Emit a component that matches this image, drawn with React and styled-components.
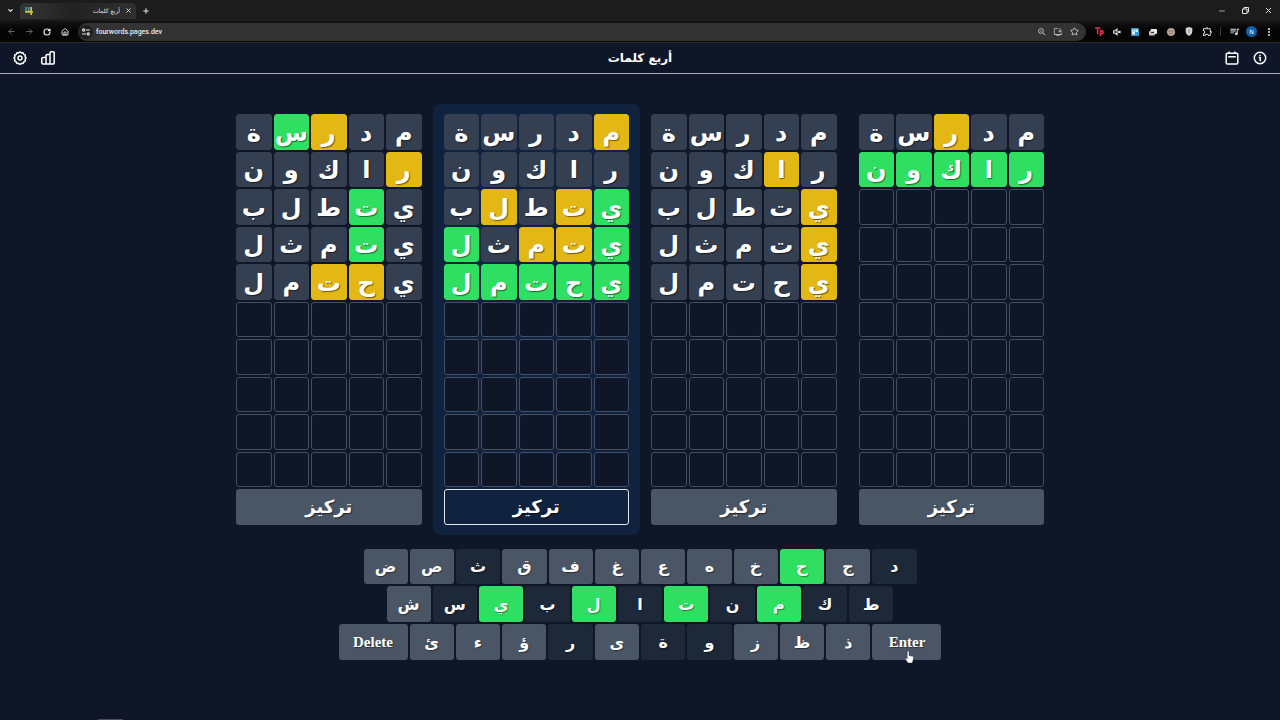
import { useState } from 'react';
import styled, { createGlobalStyle } from 'styled-components';
import {
  LuArrowLeft, LuArrowRight, LuChevronDown, LuMinus, LuPlus, LuX, LuStar,
  LuRotateCw, LuHouse, LuEllipsisVertical,
} from 'react-icons/lu';
import { MdOutlineExtension, MdQueueMusic, MdOutlineInstallDesktop, MdZoomIn } from 'react-icons/md';


// g = correct, y = wrong place, . = not in the word
const boards = [
  { guesses: [['مدرسة', '..yg.'], ['راكون', 'y....'], ['يتطلب', '.g...'], ['يتمثل', '.g...'], ['يحتمل', '.yy..']] },
  { guesses: [['مدرسة', 'y....'], ['راكون', '.....'], ['يتطلب', 'gy.y.'], ['يتمثل', 'gyy.g'], ['يحتمل', 'ggggg']] },
  { guesses: [['مدرسة', '.....'], ['راكون', '.y...'], ['يتطلب', 'y....'], ['يتمثل', 'y....'], ['يحتمل', 'y....']] },
  { guesses: [['مدرسة', '..y..'], ['راكون', 'ggggg']] },
];

const keyRows = [
  { width: 553, keys: ['ض', 'ص', 'ث', 'ق', 'ف', 'غ', 'ع', 'ه', 'خ', 'ح', 'ج', 'د'] },
  { width: 507, keys: ['ش', 'س', 'ي', 'ب', 'ل', 'ا', 'ت', 'ن', 'م', 'ك', 'ط'] },
  { width: 603, keys: ['Delete', 'ئ', 'ء', 'ؤ', 'ر', 'ى', 'ة', 'و', 'ز', 'ظ', 'ذ', 'Enter'] },
];

const found = 'حيلتم';
const used = 'ثدسباتنكطرةو';

const colors = { g: '#2fdf62', y: '#e3b714', '.': '#343f51' };

const keyColor = (key) => {
  if (found.includes(key)) return '#2fdf62';
  if (used.includes(key)) return '#1d2838';
  return '#4a5565';
};


function Board({ guesses, focused, onFocus }) {
  const cells = [];
  for (let row = 0; row < 10; row++) {
    const [word, marks] = guesses[row] || ['', ''];
    for (let col = 0; col < 5; col++) {
      cells.push(
        <Cell key={`${row}-${col}`} $color={colors[marks[col]]}>{word[col]}</Cell>
      );
    }
  }

  return (
    <BoardPanel $focused={focused}>
      <Grid dir="rtl">
        {cells}
        <FocusButton $focused={focused} onClick={onFocus}>تركيز</FocusButton>
      </Grid>
    </BoardPanel>
  );
}

function GearIcon() {
  return (
    <svg width="14" height="14" viewBox="0 0 14 14" fill="none" stroke="currentColor" strokeWidth="1.5" strokeLinejoin="round">
      <path d="M5.6 1.9 7 .9l1.4 1 1.7-.2.7 1.6 1.5.9-.2 1.6.9 1.2-.9 1.4.2 1.7-1.5.8-.7 1.6-1.7-.2-1.4 1-1.4-1-1.7.2-.7-1.6-1.5-.8.2-1.7L1 7l.9-1.2-.2-1.6 1.5-.9.7-1.6z" />
      <circle cx="7" cy="7" r="2" />
    </svg>
  );
}

function ChartIcon() {
  return (
    <svg width="14" height="14" viewBox="0 0 14 14" fill="none" stroke="currentColor" strokeWidth="1.5" strokeLinejoin="round">
      <path d="M5 13H2a1.200 1.200 0 0 1-1.200-1.200V7.700A1.200 1.200 0 0 1 2 6.500h3zM5 13V4.700A1.200 1.200 0 0 1 6.200 3.500H9V13zM9 13V2A1.200 1.200 0 0 1 10.200.8H12A1.200 1.200 0 0 1 13.200 2v9.800A1.200 1.200 0 0 1 12 13z" />
    </svg>
  );
}

function CalendarIcon() {
  return (
    <svg width="14" height="14" viewBox="0 0 14 14" fill="none" stroke="currentColor" strokeWidth="1.5" strokeLinejoin="round">
      <rect x="1.200" y="2.200" width="11.600" height="10.800" rx="1.200" />
      <path d="M4 .4v2.400M10 .4v2.400M3.200 5.700h7.600" />
    </svg>
  );
}

function InfoIcon() {
  return (
    <svg width="14" height="14" viewBox="0 0 14 14" fill="none" stroke="currentColor" strokeWidth="1.5">
      <circle cx="7" cy="7" r="5.700" />
      <path d="M5.700 6.600H7.200V10.200" />
      <circle cx="7" cy="4.300" r=".5" fill="currentColor" strokeWidth=".7" />
    </svg>
  );
}

function FavIcon() {
  return (
    <svg width="8" height="8" viewBox="0 0 8 8" fill="none" strokeWidth="1.700">
      <path d="M1 0v5" stroke="#3f9a6c" />
      <path d="M3.600 0v4" stroke="#4b8ed0" />
      <path d="M.2 4.800H8M6.200 0v8" stroke="#d8c22f" />
    </svg>
  );
}

function SiteIcon() {
  return (
    <svg width="8" height="8" viewBox="0 0 8 8" fill="none" stroke="currentColor" strokeWidth="1.100">
      <circle cx="1.700" cy="2" r="1.100" />
      <path d="M4 2h4M0 6h4" />
      <circle cx="6.300" cy="6" r="1.100" />
    </svg>
  );
}

function Extensions() {
  return (
    <>
      <IconButton aria-label="Extension" $color="#e5344a">
        <svg width="9" height="9" viewBox="0 0 9 9" fill="none" stroke="currentColor" strokeWidth="1.500">
          <path d="M0 1h5.500M2.600 1v6M5.500 9V3.800h1.200a1.500 1.500 0 0 1 0 3H5.500" />
        </svg>
      </IconButton>
      <IconButton aria-label="Mute">
        <svg width="8" height="8" viewBox="0 0 8 8" fill="none" stroke="currentColor" strokeWidth="1.100">
          <path d="M.5 3h1.300L4 1.200v5.600L1.800 5H.5z" />
          <path d="M5.300 2.800l2.200 2.400M7.500 2.800L5.300 5.200" />
        </svg>
      </IconButton>
      <IconButton aria-label="Extension">
        <svg width="8" height="8" viewBox="0 0 8 8">
          <rect width="8" height="8" rx="1" fill="#2d9dd2" />
          <path d="M1.200 1.500h5.600v2.500H4v2.500H1.200z" fill="#e6f5fc" />
          <path d="M2 3h3" stroke="#2d9dd2" strokeWidth=".7" />
        </svg>
      </IconButton>
      <IconButton aria-label="Extension">
        <svg width="8" height="8" viewBox="0 0 8 8">
          <rect x="1.500" y="1" width="6.500" height="5" rx="1" fill="#efe9e3" />
          <rect y="3" width="6" height="4.500" rx="1" fill="#c9c3bd" />
          <path d="M2 4.500h3" stroke="#40372f" />
        </svg>
      </IconButton>
      <IconButton aria-label="Extension">
        <svg width="8" height="8" viewBox="0 0 8 8">
          <circle cx="4" cy="4" r="4" fill="#b9a19a" />
          <path d="M1 3h6M2 5.500h4" stroke="#856f69" strokeWidth=".7" />
        </svg>
      </IconButton>
      <IconButton aria-label="Extension">
        <svg width="8" height="9" viewBox="0 0 8 9">
          <path d="M4 0l3.300 1v3.500C7.300 6.700 5.500 8.300 4 9 2.500 8.300.7 6.700.7 4.500V1z" fill="#d2d4d6" />
          <path d="M4 2v4.500" stroke="#92979b" />
        </svg>
      </IconButton>
      <IconButton aria-label="Extensions"><MdOutlineExtension size={11} /></IconButton>
    </>
  );
}

function Pointer() {
  return (
    <PointerSvg width="9" height="12" viewBox="0 0 9 12">
      <path d="M2.200 1a.9.900 0 0 1 1.800 0v3.500l3.700.8c.6.200.9.600.8 1.200L8 9.500 7.200 12H3L.4 8.200c-.5-.8.3-1.500 1-1l.8.7z" fill="#fff" stroke="#222" strokeWidth=".4" />
    </PointerSvg>
  );
}

function App() {

  const [focusedBoard, setFocusedBoard] = useState(1)

  return (
    <Page>
      <GlobalStyle />

      <TabStrip>
        <IconButton aria-label="Search tabs"><LuChevronDown size={7} strokeWidth={4} /></IconButton>
        <Tab>
          <FavIcon />
          <TabTitle dir="rtl">أربع كلمات</TabTitle>
          <IconButton aria-label="Close tab" $width={8}><LuX size={7} strokeWidth={3} /></IconButton>
        </Tab>
        <IconButton aria-label="New tab"><LuPlus size={8} strokeWidth={3} /></IconButton>
        <WindowButtons>
          <IconButton aria-label="Minimize"><LuMinus size={8} /></IconButton>
          <IconButton aria-label="Restore">
            <svg width="7" height="7" viewBox="0 0 7 7" fill="none" stroke="currentColor">
              <path d="M.5 2h4.500v4.500H.5zM2 2V.5h4.500V5H5" />
            </svg>
          </IconButton>
          <IconButton aria-label="Close"><LuX size={9} strokeWidth={2.500} /></IconButton>
        </WindowButtons>
      </TabStrip>

      <Toolbar>
        <NavButtons>
          <IconButton aria-label="Back" $color="#6a6a6a"><LuArrowLeft size={9} strokeWidth={2.500} /></IconButton>
          <IconButton aria-label="Forward" $color="#6a6a6a"><LuArrowRight size={9} strokeWidth={2.500} /></IconButton>
          <IconButton aria-label="Reload"><LuRotateCw size={8} strokeWidth={3.500} /></IconButton>
          <IconButton aria-label="Home"><LuHouse size={8} strokeWidth={3} /></IconButton>
        </NavButtons>
        <AddressBar>
          <SiteBadge><SiteIcon /></SiteBadge>
          <AddressInput aria-label="Address" defaultValue="fourwords.pages.dev" />
          <IconButton aria-label="Zoom" $width={16} $color="#b9b9b9"><MdZoomIn size={10} /></IconButton>
          <IconButton aria-label="Install" $width={16} $color="#b9b9b9"><MdOutlineInstallDesktop size={10} /></IconButton>
          <IconButton aria-label="Bookmark" $width={16} $color="#c9c9c9"><LuStar size={9} strokeWidth={2.500} /></IconButton>
        </AddressBar>
        <ExtensionButtons>
          <Extensions />
          <Divider />
          <IconButton aria-label="Media"><MdQueueMusic size={11} /></IconButton>
          <Avatar aria-label="Profile">N</Avatar>
          <IconButton aria-label="Menu"><LuEllipsisVertical size={10} strokeWidth={3} /></IconButton>
        </ExtensionButtons>
      </Toolbar>

      <Header>
        <HeaderGroup>
          <HeaderButton aria-label="Settings"><GearIcon /></HeaderButton>
          <HeaderButton aria-label="Statistics"><ChartIcon /></HeaderButton>
        </HeaderGroup>
        <Title dir="rtl">أربع كلمات</Title>
        <HeaderGroup $end>
          <HeaderButton aria-label="Calendar"><CalendarIcon /></HeaderButton>
          <HeaderButton aria-label="About"><InfoIcon /></HeaderButton>
        </HeaderGroup>
      </Header>

      <Game>
        <Boards>
          {boards.map((board, index) => (
            <Board
              key={index}
              guesses={board.guesses}
              focused={focusedBoard === index}
              onFocus={() => setFocusedBoard(index)}
            />
          ))}
        </Boards>

        <Keyboard>
          {keyRows.map((row) => (
            <KeyRow key={row.width} $width={row.width}>
              {row.keys.map((key) => {
                if (key.length === 1) return <Key key={key} $color={keyColor(key)}>{key}</Key>
                return (
                  <WideKey key={key} $color="#4a5565">
                    {key}
                    {key === 'Enter' && <Pointer />}
                  </WideKey>
                )
              })}
            </KeyRow>
          ))}
        </Keyboard>
      </Game>

      <Taskbar><TaskbarItem /></Taskbar>
    </Page>
  );
}

export default App;


const GlobalStyle = createGlobalStyle`
  * {
    box-sizing: border-box;
  }

  body {
    margin: 0;
    background-color: #0e1628;
    color: #fff;
    font-family: "DejaVu Sans", sans-serif;
  }

  button {
    border: none;
    padding: 0;
    color: inherit;
    font-family: inherit;
    cursor: pointer;
  }
`;

const Page = styled.div`
  display: flex;
  flex-direction: column;
  min-height: 100vh;
`;

const IconButton = styled.button`
  display: flex;
  align-items: center;
  justify-content: center;
  flex: none;
  width: ${props => props.$width || 18}px;
  height: 16px;
  background: none;
  color: ${props => props.$color || '#e6e6e6'};
`;

const TabStrip = styled.div`
  display: flex;
  align-items: center;
  height: 21px;
  padding-left: 1px;
  background-color: #1c1c1c;
`;

const Tab = styled.div`
  display: flex;
  align-items: center;
  gap: 4px;
  width: 116px;
  height: 16px;
  margin: 0 1px;
  padding: 0 4px 0 5px;
  border-radius: 5px 5px 0 0;
  background: linear-gradient(90deg, #343635, #222 45%, #303030);
`;

const TabTitle = styled.span`
  flex: 1;
  font-size: 6px;
  line-height: 12px;
  text-align: right;
  color: #e3e3e3;
`;

const WindowButtons = styled.div`
  display: flex;
  gap: 5px;
  margin-left: auto;
  padding-right: 3px;
`;

const Toolbar = styled.div`
  display: flex;
  align-items: center;
  height: 22px;
  padding: 0 2px;
  background: linear-gradient(#141414, #050505 40%);
  border-bottom: 1px solid #2b2b2b;
`;

const NavButtons = styled.div`
  display: flex;
  width: 76px;
`;

const AddressBar = styled.div`
  display: flex;
  align-items: center;
  flex: 1;
  height: 18px;
  padding: 0 4px 0 1px;
  border-radius: 9px;
  background-color: #333;
`;

const SiteBadge = styled.span`
  display: flex;
  align-items: center;
  justify-content: center;
  width: 14px;
  height: 14px;
  border-radius: 50%;
  background-color: #1f1f1f;
  color: #e6e6e6;
`;

const AddressInput = styled.input`
  flex: 1;
  min-width: 0;
  border: none;
  outline: none;
  padding: 0 3px;
  background: none;
  color: #ececec;
  font: 500 7px Roboto, sans-serif;
`;

const ExtensionButtons = styled.div`
  display: flex;
  align-items: center;
  padding-left: 4px;
`;

const Divider = styled.span`
  width: 1px;
  height: 9px;
  margin: 0 4px;
  background-color: #3a3a3a;
`;

const Avatar = styled.button`
  width: 11px;
  height: 11px;
  margin: 0 3px;
  border-radius: 50%;
  background-color: #0e62ad;
  font-size: 6px;
  line-height: 11px;
`;

const Header = styled.header`
  display: grid;
  grid-template-columns: 1fr auto 1fr;
  align-items: center;
  height: 31px;
  padding: 0 10px;
  border-bottom: 1px solid #a9b0bc;
`;

const HeaderGroup = styled.div`
  display: flex;
  gap: 8px;
  justify-content: ${props => props.$end ? 'flex-end' : 'flex-start'};
`;

const HeaderButton = styled.button`
  display: flex;
  align-items: center;
  justify-content: center;
  width: 20px;
  height: 20px;
  background: none;
`;

const Title = styled.h1`
  margin: 0;
  font-size: 12px;
  line-height: 20px;
`;

const Game = styled.main`
  display: flex;
  flex-direction: column;
  flex: 1;
  align-items: center;
  gap: 14px;
  padding-top: 30px;
`;

const Boards = styled.div`
  display: grid;
  grid-template-columns: repeat(4, 1fr);
  width: 100%;
  max-width: 830px;
`;

const BoardPanel = styled.section`
  padding: 10px 11px;
  border-radius: 8px;
  background-color: ${props => props.$focused ? '#11223e' : 'transparent'};
`;

const Grid = styled.div`
  display: grid;
  grid-template-columns: repeat(5, 1fr);
  grid-auto-rows: 1fr;
  gap: 2px;
`;

const Cell = styled.div`
  display: flex;
  align-items: center;
  justify-content: center;
  aspect-ratio: 1;
  min-width: 0;
  min-height: 0;
  padding-top: 2px;
  border: 1px solid ${props => props.$color || '#445062'};
  border-radius: 3px;
  background-color: ${props => props.$color || '#0e1628'};
  font-size: 24px;
  font-weight: 700;
  line-height: 32px;
  text-shadow: 1px 1px 1px rgba(0, 0, 0, .5);
`;

const FocusButton = styled.button`
  grid-column: 1 / -1;
  border: 1px solid ${props => props.$focused ? '#e2e8f0' : 'transparent'};
  border-radius: 3px;
  background-color: ${props => props.$focused ? 'transparent' : '#4a5565'};
  font-size: 18px;
  font-weight: 700;
  line-height: 28px;
  text-shadow: 1px 1px 1px rgba(0, 0, 0, .5);
`;

const Keyboard = styled.div`
  display: grid;
  grid-template-rows: repeat(3, 1fr);
  justify-items: center;
  gap: 2px;
  width: 100%;
  min-height: 111px;
`;

const KeyRow = styled.div`
  display: flex;
  gap: 2px;
  width: 100%;
  max-width: ${props => props.$width}px;
`;

const Key = styled.button`
  flex: 1;
  min-width: 0;
  padding-top: 2px;
  border-radius: 3px;
  background-color: ${props => props.$color};
  font-size: 16px;
  font-weight: 700;
  line-height: 24px;
  text-shadow: 1px 1px 1px rgba(0, 0, 0, .4);
`;

const WideKey = styled(Key)`
  position: relative;
  flex: 0 1 69px;
  padding-top: 0;
  font-family: "Liberation Serif", serif;
  font-size: 15px;
`;

const PointerSvg = styled.svg`
  position: absolute;
  right: 27px;
  bottom: -3px;
`;

const Taskbar = styled.footer`
  height: 1px;
  padding-left: 98px;
  background-color: #0b1a22;
`;

const TaskbarItem = styled.div`
  width: 25px;
  height: 1px;
  background-color: #4a4f58;
`;
